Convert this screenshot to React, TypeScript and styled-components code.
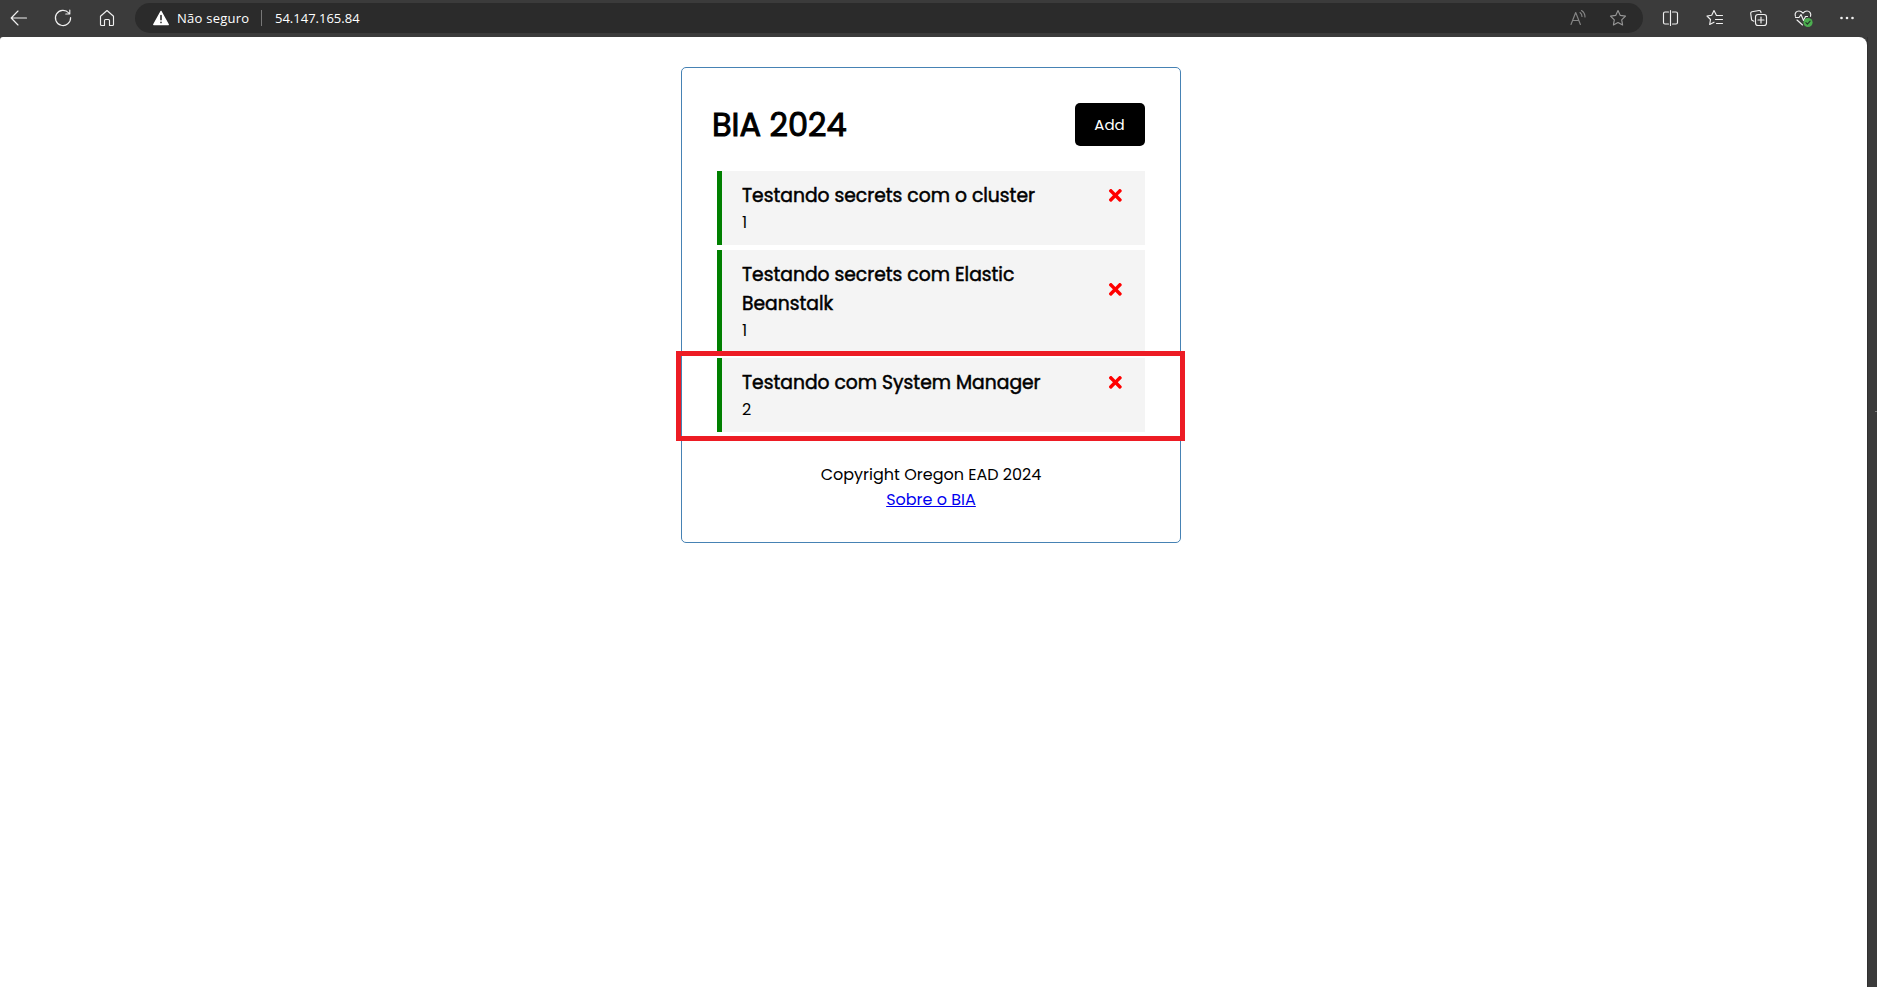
import React from "react";
import styled, { createGlobalStyle } from "styled-components";
import { FaTimes } from "react-icons/fa";

const GlobalStyle = createGlobalStyle`
  * { box-sizing: border-box; margin: 0; padding: 0; }
  body { background: #3b3b3b; font-family: Poppins, Inter, sans-serif; color: #000; }
`;

const Browser = styled.div`
  display: flex;
  flex-direction: column;
  height: 987px;
  overflow: hidden;
  background: #3b3b3b;
`;

const Toolbar = styled.header`
  display: flex;
  align-items: center;
  flex: none;
  height: 37px;
  padding: 0 20px 1px 9px;
`;

const IconGroup = styled.div<{ $gap: number }>`
  display: flex;
  align-items: center;
  gap: ${(p) => p.$gap}px;
`;

const Icon = styled.svg<{ $color?: string }>`
  display: block;
  flex: none;
  width: 20px;
  height: 20px;
  fill: none;
  stroke: ${(p) => p.$color ?? "#f0f0f0"};
  stroke-width: 1.15;
  stroke-linecap: round;
  stroke-linejoin: round;
`;

const AddressBar = styled.div`
  display: flex;
  align-items: center;
  flex: 1;
  height: 30px;
  margin: 0 18px;
  padding: 0 15px 0 16px;
  border-radius: 15px;
  background: #2b2b2b;
  color: #fff;
  font-family: "Segoe UI", "Open Sans", sans-serif;
  font-size: 13px;
  line-height: 18px;
`;

const Security = styled.span`
  width: 73px;
  margin-left: 6px;
  letter-spacing: 0.25px;
  white-space: nowrap;
`;

const Divider = styled.span`
  width: 1px;
  height: 16px;
  margin: 0 13px 0 11px;
  background: #777;
`;

const Address = styled.span`
  flex: 1;
  letter-spacing: 0;
`;

const Body = styled.div`
  display: flex;
  flex: 1;
`;

const Viewport = styled.main`
  flex: 1;
  padding-top: 30px;
  border-radius: 3px 8px 0 0;
  background: #fff;
`;

const Gutter = styled.div`
  display: flex;
  justify-content: flex-end;
  width: 10px;
  padding-top: 374px;
  border-left: 1px solid #303030;
`;

const GutterMark = styled.span`
  width: 2px;
  height: 1px;
  background: #7d7d7d;
`;

const Card = styled.section`
  width: 500px;
  height: 476px;
  margin: 0 0 0 681px;
  padding: 30px;
  border: 1px solid steelblue;
  border-radius: 5px;
  font-size: 16px;
  line-height: 1.6;
`;

const CardHeader = styled.div`
  display: flex;
  align-items: center;
  justify-content: space-between;
  margin-bottom: 20px;
`;

const Title = styled.h1`
  font-size: 32px;
  font-weight: 400;
  line-height: 51.2px;
  -webkit-text-stroke: 1px #000;
`;

const AddButton = styled.button`
  width: 70px;
  height: 43px;
  margin: 5px;
  padding-right: 1px;
  border: 0;
  border-radius: 5px;
  background: #000;
  color: #fff;
  font: 400 15px Poppins, Inter, sans-serif;
`;

const Task = styled.article`
  position: relative;
  margin: 0 5px 5px;
  padding: 10px 20px 10px 20px;
  border-left: 5px solid green;
  background: #f4f4f4;
  &:last-of-type { margin-bottom: 0; }
`;

const TaskTitle = styled.h3`
  display: flex;
  align-items: center;
  justify-content: space-between;
  font-size: 18.72px;
  font-weight: 400;
  line-height: 29px;
`;

const TaskText = styled.span`
  width: 320px;
  -webkit-text-stroke: 0.5px #000;
`;

const TaskDay = styled.p`
  font-size: 16px;
  line-height: 25px;
`;

const Highlight = styled.div`
  position: absolute;
  inset: -7px -40px -9px -46px;
  border: 5px solid #ed1c24;
  pointer-events: none;
`;

const Footer = styled.footer`
  margin-top: 30px;
  text-align: center;
  font-size: 16px;
  line-height: 25px;
`;

const AboutLink = styled.a`
  color: #0000ee;
  text-decoration: underline;
`;

const tasks = [
  { text: "Testando secrets com o cluster", day: "1" },
  { text: "Testando secrets com Elastic Beanstalk", day: "1" },
  { text: "Testando com System Manager", day: "2", highlighted: true },
];

const STAR = "M10 2.6l2.3 4.8 5.2.7-3.8 3.7.9 5.2-4.6-2.5L5.400 17l.9-5.200L2.500 8.100l5.200-.7z";

export default function App() {
  return (
    <Browser>
      <GlobalStyle />
      <Toolbar>
        <IconGroup $gap={24}>
          <Icon viewBox="0 0 20 20"><path d="M17.500 10H2.500M9 3L2.200 10 9 17" /></Icon>
          <Icon viewBox="0 0 20 20"><path d="M17.600 9.500A7.600 7.600 0 1 1 15.800 5M16.800 2v4h-4" /></Icon>
          <Icon viewBox="0 0 20 20"><path d="M3.500 8.200L10 2.500l6.500 5.700V16.500q0 1-1 1h-3v-5q0-1-1-1h-3q-1 0-1 1v5h-3q-1 0-1-1z" /></Icon>
        </IconGroup>
        <AddressBar>
          <Icon viewBox="0 0 20 20">
            <path d="M10 3.500L17.200 16.500H2.800z" fill="#fff" stroke="#fff" strokeWidth="1.500" />
            <path d="M10 7.500v4.200M10 14.300v.3" stroke="#2b2b2b" strokeWidth="1.600" />
          </Icon>
          <Security>Não seguro</Security>
          <Divider />
          <Address>54.147.165.84</Address>
          <IconGroup $gap={20}>
            <Icon viewBox="0 0 20 20" $color="#858585">
              <path d="M3 16.500L7.700 4.500l4.700 12M4.800 12.500h5.900M12 4.500q2 1.500 2 4M13.500 2.500q3.500 2.300 3.500 6.500" />
            </Icon>
            <Icon viewBox="0 0 20 20" $color="#969696"><path d={STAR} /></Icon>
          </IconGroup>
        </AddressBar>
        <IconGroup $gap={24}>
          <Icon viewBox="0 0 20 20">
            <path d="M7.500 4H4q-1.500 0-1.500 1.500v9Q2.500 16 4 16h3.500M11.500 4H15q1.500 0 1.500 1.500v9Q16.500 16 15 16h-3.500M9.500 2.500v15" />
          </Icon>
          <Icon viewBox="0 0 20 20">
            <path d="M11.500 7.500L9 2.500 6.700 7.300l-4.700.7 3.500 3.500-.8 5L9 14.200M11.500 7.500h6M10.500 11.500h7M11.500 15.500h6" />
          </Icon>
          <Icon viewBox="0 0 20 20">
            <path d="M4.800 13.200l-1.300-.6q-.9-.4-1-1.400L1.700 5.500q-.1-1.300 1.200-1.700L10 2.500q1.300-.1 1.700 1l.3 1.200" />
            <rect x="6.500" y="6.500" width="11" height="11" rx="2.500" />
            <path d="M12 9v6M9 12h6" />
          </Icon>
          <Icon viewBox="0 0 20 20">
            <path d="M2.400 8.300C1.300 5 3.500 3 6 3q2.200 0 4 2.200Q11.700 3 14 3c2.700 0 4.500 2.500 3.500 5.300M2.500 9.500h3.500l2-3 2.500 6 2-4h2M4 12l5.500 5" />
            <circle cx="15" cy="14.500" r="4.600" fill="#4caf50" stroke="none" />
            <path d="M12.900 14.600l1.500 1.500 2.700-3" stroke="#26362a" />
          </Icon>
          <Icon viewBox="0 0 20 20">
            <g fill="#f0f0f0" stroke="none"><circle cx="4.500" cy="10" r="1.300" /><circle cx="10" cy="10" r="1.300" /><circle cx="15.500" cy="10" r="1.300" /></g>
          </Icon>
        </IconGroup>
      </Toolbar>
      <Body>
        <Viewport>
          <Card>
            <CardHeader>
              <Title>BIA 2024</Title>
              <AddButton>Add</AddButton>
            </CardHeader>
            {tasks.map((task) => (
              <Task key={task.text}>
                <TaskTitle>
                  <TaskText>{task.text}</TaskText>
                  <FaTimes color="red" />
                </TaskTitle>
                <TaskDay>{task.day}</TaskDay>
                {task.highlighted && <Highlight />}
              </Task>
            ))}
            <Footer>
              <p>Copyright Oregon EAD 2024</p>
              <AboutLink href="#">Sobre o BIA</AboutLink>
            </Footer>
          </Card>
        </Viewport>
        <Gutter><GutterMark /></Gutter>
      </Body>
    </Browser>
  );
}
